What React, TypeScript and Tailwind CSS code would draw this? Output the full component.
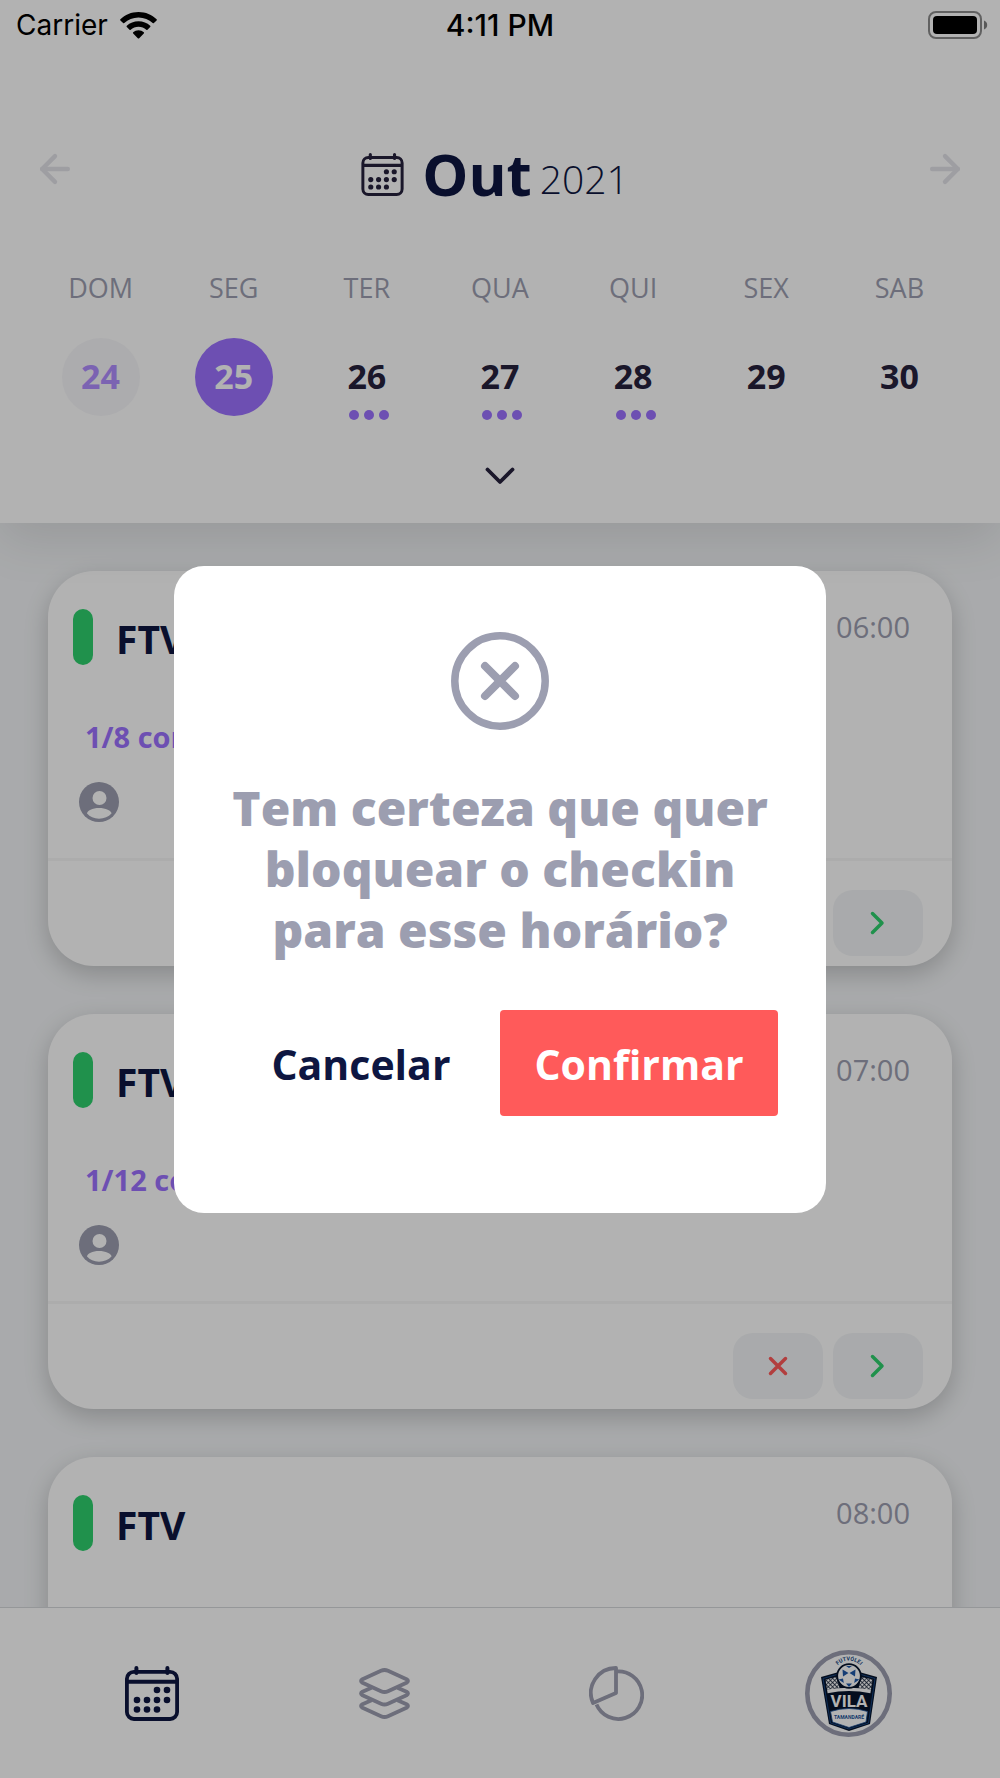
import React, { useState } from "react";
import { FiArrowLeft, FiArrowRight } from "react-icons/fi";

interface DayType {
    label: string;
    day: number;
    events?: number;
}

interface ClassType {
    name: string;
    time: string;
    confirmed?: string;
}

const days: DayType[] = [
    { label: "DOM", day: 24 },
    { label: "SEG", day: 25 },
    { label: "TER", day: 26, events: 3 },
    { label: "QUA", day: 27, events: 3 },
    { label: "QUI", day: 28, events: 3 },
    { label: "SEX", day: 29 },
    { label: "SAB", day: 30 },
];

const classes: ClassType[] = [
    { name: "FTV", time: "06:00", confirmed: "1/8 confirmados" },
    { name: "FTV", time: "07:00", confirmed: "1/12 confirmados" },
    { name: "FTV", time: "08:00" },
];

const TODAY = 24;

function CalendarIcon({ className }: { className: string }) {
    const dots = [
        [32, 24], [42, 24],
        [12, 34], [22, 34], [32, 34], [42, 34],
        [12, 43.5], [22, 43.5], [32, 43.5],
    ];
    return (
        <svg viewBox="0 0 54 55" fill="none" stroke="currentColor" className={className}>
            <rect x="1.9" y="5.8" width="50.2" height="47.2" rx="7" strokeWidth="3.8" />
            <path d="M2 15.8h50" strokeWidth="4" />
            <path d="M11.4 2v5M42.4 2v5" strokeWidth="4" strokeLinecap="round" />
            {dots.map(([cx, cy]) => (
                <circle key={`${cx}-${cy}`} cx={cx} cy={cy} r="3.3" fill="currentColor" stroke="none" />
            ))}
        </svg>
    );
}

function StatusBar() {
    return (
        <div className="grid grid-cols-3 items-center h-[50px] px-4 text-[28px] text-black font-[Inter,sans-serif]">
            <div className="flex items-center gap-3">
                <span>Carrier</span>
                <svg viewBox="0 0 37 27" className="w-[37px] h-[27px]" fill="currentColor">
                    <path d="M18.5 0C25.6 0 32 2.8 36.6 7.2a.9.9 0 0 1 0 1.2l-2.7 2.7a.9.9 0 0 1-1.2 0C29 7.5 24 5.4 18.5 5.4S8 7.5 4.3 11.1a.9.9 0 0 1-1.2 0L.4 8.4a.9.9 0 0 1 0-1.2C5 2.8 11.4 0 18.5 0Z" />
                    <path d="M18.5 9.3c4.5 0 8.6 1.7 11.7 4.5.4.4.4.9 0 1.3l-2.7 2.6c-.4.4-.9.4-1.2.1-2.1-1.9-4.8-3-7.8-3s-5.7 1.100-7.8 3c-.3.3-.8.3-1.2-.1l-2.7-2.6c-.4-.4-.4-.9 0-1.3 3.1-2.8 7.2-4.5 11.7-4.5Z" />
                    <path d="M18.5 18.3c2 0 3.9.7 5.3 2 .4.3.4.9 0 1.2l-4.6 4.8c-.4.4-1 .4-1.4 0l-4.6-4.8c-.4-.3-.4-.9 0-1.2 1.4-1.3 3.3-2 5.3-2Z" />
                </svg>
            </div>
            <span className="text-center text-[30px] font-medium">4:11 PM</span>
            <svg viewBox="0 0 60 28" className="w-[60px] h-[28px] -mr-1 justify-self-end">
                <rect x="1" y="1" width="52" height="26" rx="7" fill="none" stroke="black" strokeOpacity="0.45" strokeWidth="2" />
                <rect x="5" y="5" width="44" height="18" rx="4" />
                <path d="M56 9.5c2 .6 3.2 2.4 3.2 4.5s-1.2 3.9-3.2 4.5z" fillOpacity="0.5" />
            </svg>
        </div>
    );
}

function ClassCard({ item }: { item: ClassType }) {
    return (
        <article className="shrink-0 rounded-[46px] bg-white shadow-[0_8px_24px_rgba(0,0,0,0.2)]">
            <div className="flex items-start pt-[38px] pl-[25px] pr-[42px]">
                <span className="w-5 h-14 rounded-full bg-[#2ed06d]" />
                <h2 className="flex-1 pl-[23px] pt-1 text-[39px] leading-[52px] font-bold text-[#0e1641]">{item.name}</h2>
                <time className="text-[29px] leading-[36px] text-[#9c9eb0]">{item.time}</time>
            </div>
            {item.confirmed && (
                <p className="pt-[54px] pl-[37px] text-[29px] leading-[36px] font-bold text-[#9c72ff]">{item.confirmed}</p>
            )}
            <div className="pt-[27px] pb-9 pl-[31px] text-[#9c9eb0]">
                {item.confirmed && (
                    <svg viewBox="0 0 40 40" className="w-10 h-10">
                        <circle cx="20" cy="20" r="20" fill="currentColor" />
                        <circle cx="20.5" cy="16" r="7" fill="white" />
                        <path d="M8 31.5c0-3 5.5-5.5 12-5.5s12.5 2.5 12.5 5.5c-3 3.4-7.3 5.2-12.5 5.2S11 34.9 8 31.5Z" fill="white" />
                    </svg>
                )}
            </div>
            {item.confirmed && (
                <div className="flex justify-end gap-[10px] pt-[29px] pb-[10px] pr-[29px] border-t-3 border-[#f7f7f7]">
                    <button aria-label="Bloquear checkin" className="flex items-center justify-center w-[90px] h-[66px] rounded-[20px] bg-[#f2f4f6]">
                        <svg viewBox="0 0 20 20" className="w-5 h-5" stroke="#ff5a5a" strokeWidth="3.5" strokeLinecap="round">
                            <path d="M2.5 2.5l15 15M17.5 2.5l-15 15" />
                        </svg>
                    </button>
                    <button aria-label="Abrir horário" className="flex items-center justify-center w-[90px] h-[66px] rounded-[20px] bg-[#f2f4f6]">
                        <svg viewBox="0 0 16 24" className="w-4 h-6" fill="none" stroke="#2ed06d" strokeWidth="3.5" strokeLinecap="round" strokeLinejoin="round">
                            <path d="M2.5 2.5l9.500 9.500-9.500 9.500" />
                        </svg>
                    </button>
                </div>
            )}
            {/* classes without check-ins keep an empty body */}
            {!item.confirmed && <div className="h-52" />}
        </article>
    );
}

function ClubLogo() {
    return (
        <svg viewBox="0 0 87 87" className="w-[87px] h-[87px]" role="img" aria-label="Vila Tamandaré">
            <defs>
                <path id="arc" d="M29.5 20.5A15.5 15.5 0 0 1 58.5 20.5" />
                <pattern id="net" width="3" height="3" patternUnits="userSpaceOnUse" patternTransform="rotate(45)">
                    <rect width="3" height="3" fill="white" />
                    <path d="M0 0h3M0 0v3" stroke="#06142b" strokeWidth="1.3" />
                </pattern>
            </defs>
            <circle cx="43.5" cy="43.5" r="41.2" fill="white" stroke="#9c9eb0" strokeWidth="4.6" />
            <text fontFamily="Roboto, sans-serif" fontSize="5.5" fontWeight="700" fill="#1a4a86" textAnchor="middle">
                <textPath href="#arc" startOffset="50%">FUTVÓLEI</textPath>
            </text>
            <path d="M16 27l16-4.5h24l16 4.5-7 47-21 7-20-7Z" fill="#06142b" />
            <path d="M18 28.5l14-4h24l14 4-6.5 44.5-19.5 6-18.5-6Z" fill="none" stroke="#1c5299" strokeWidth="0.8" />
            <path d="M20.5 29.5l11-2.5 3 11-12.5 1.5Z" fill="url(#net)" />
            <path d="M67.5 29.5l-11-2.5-3 11 12.5 1.5Z" fill="url(#net)" />
            <path d="M22 39.5q22-3.5 44 0l-.6 3.8q-21.5-4.5-42.8 0Z" fill="white" />
            <path d="M25.5 61.5q18.5-6 37 0l-1.5 10.5-17 5.5-16.5-5.5Z" fill="white" stroke="#1c5299" strokeWidth="0.8" />
            <text x="44" y="57" fontFamily="Roboto, sans-serif" fontSize="17" fontWeight="700" fill="white" textAnchor="middle">VILA</text>
            <text x="44" y="68.5" fontFamily="Roboto, sans-serif" fontSize="5" fontWeight="700" fill="#1c5299" textAnchor="middle">TAMANDARÉ</text>
            <circle cx="44" cy="26" r="11.8" fill="white" stroke="#06142b" strokeWidth="1.8" />
            <path d="M37.5 19.5l6 3.5-5.5 3.5ZM50.5 19.5l-6 3.5 5.5 3.5ZM44 37l-3-3.5h6ZM33.5 29.5l4.5-1 .8 4.500ZM54.5 29.5l-4.500-1-.8 4.500ZM41 16h6l-3 2Z" fill="#1f58a8" />
        </svg>
    );
}

function TabBar() {
    return (
        <nav className="grid grid-cols-4 items-center justify-items-center h-[171px] px-9 bg-white border-t border-[#d6d8db] z-10">
            <a href="#agenda" aria-label="Agenda" className="text-[#0e1641]">
                <CalendarIcon className="w-[54px] h-[55px]" />
            </a>
            <a href="#turmas" aria-label="Turmas" className="text-[#9c9eb0]">
                <svg viewBox="0 0 51 51" className="w-[51px] h-[51px]" fill="none" stroke="currentColor" strokeWidth="3.8" strokeLinejoin="round">
                    <path d="M22 2.8Q25.5 1.2 29 2.8L47.5 11.2Q50.5 13 47.5 14.8L29 23.2Q25.5 24.8 22 23.2L3.5 14.8Q.5 13 3.5 11.2Z" />
                    <path d="M12.5 19.7L3.5 23.7Q.5 25.5 3.5 27.3L22 35.7Q25.5 37.3 29 35.7L47.5 27.3Q50.5 25.5 47.5 23.7L38.5 19.7" />
                    <path d="M12.5 32.2L3.5 36.2Q.5 38 3.5 39.8L22 48.2Q25.5 49.8 29 48.2L47.5 39.8Q50.5 38 47.5 36.2L38.5 32.2" />
                </svg>
            </a>
            <a href="#relatorios" aria-label="Relatórios" className="text-[#9c9eb0]">
                <svg viewBox="0 0 55 55" className="w-[55px] h-[55px]" fill="none" stroke="currentColor" strokeWidth="3.8" strokeLinejoin="round">
                    <path d="M27 2V27L4 37A25 25 0 0 1 27 2Z" />
                    <path d="M27 5.5A23.8 23.8 0 1 1 7.5 38.5" />
                </svg>
            </a>
            <a href="#perfil">
                <ClubLogo />
            </a>
        </nav>
    );
}

export default function App() {
    const [selected, setSelected] = useState(25);
    const [open, setOpen] = useState(true);

    return (
        <div className="flex flex-col h-screen overflow-hidden bg-[#f2f4f6] font-['Open_Sans',sans-serif]">
            <header className="relative z-10 bg-white shadow-[0_16px_48px_rgba(0,0,0,0.1)]">
                <StatusBar />
                <div className="flex items-start justify-between px-[33px] pt-[84px]">
                    <button aria-label="Semana anterior" className="pt-[13px] text-[#e3e3e9]">
                        <FiArrowLeft className="w-11 h-11" strokeWidth={2.4} />
                    </button>
                    <h1 className="flex items-center pr-[10px] text-[#0e1641]">
                        <CalendarIcon className="w-[43px] h-[43px] mr-[18px] text-[#26213d]" />
                        <span className="text-[58px] leading-[80px] font-bold">Out</span>
                        <span className="pl-2 pt-[10px] text-[39px] font-light">2021</span>
                    </h1>
                    <button aria-label="Próxima semana" className="pt-[13px] text-[#e3e3e9]">
                        <FiArrowRight className="w-11 h-11" strokeWidth={2.4} />
                    </button>
                </div>

                <div className="grid grid-cols-7 px-[34px] pt-[54px]">
                    {days.map((d) => (
                        <div key={d.label} className="flex flex-col items-center">
                            <span className="text-[27px] leading-[40px] text-[#9c9eb0]">{d.label}</span>
                            <button
                                onClick={() => setSelected(d.day)}
                                className={
                                    "mt-[30px] pb-[2px] w-[78px] h-[78px] rounded-full text-[34px] font-bold " +
                                    (d.day === selected
                                        ? "bg-[#9c72ff] text-white"
                                        : d.day === TODAY
                                            ? "bg-[#f7f7fa] text-[#b08eff]"
                                            : "text-[#26213d]")
                                }
                            >
                                {d.day}
                            </button>
                            {d.events && (
                                <div className="flex gap-[5px] pl-[5px] -mt-[6px]">
                                    {Array.from({ length: d.events }, (_, i) => (
                                        <span key={i} className="w-[10px] h-[10px] rounded-full bg-[#9c72ff]" />
                                    ))}
                                </div>
                            )}
                        </div>
                    ))}
                </div>

                <button aria-label="Expandir calendário" className="flex justify-center w-full pt-[47px] pb-[38px]">
                    <svg viewBox="0 0 30 18" className="w-[30px] h-[18px]" fill="none" stroke="#26213d" strokeWidth="3.8" strokeLinecap="round" strokeLinejoin="round">
                        <path d="M2.5 2.5L15 15 27.5 2.5" />
                    </svg>
                </button>
            </header>

            <main className="flex flex-col flex-1 min-h-0 gap-12 px-12 pt-12 overflow-hidden">
                {classes.map((item) => (
                    <ClassCard key={item.time} item={item} />
                ))}
            </main>

            <TabBar />

            {open && (
                <div className="fixed inset-0 z-20 flex items-center justify-center bg-black/30">
                    <div role="dialog" aria-modal="true" className="flex flex-col items-center w-full max-w-[652px] px-12 pt-[66px] pb-[97px] rounded-[30px] bg-white">
                        <svg viewBox="0 0 98 98" className="w-[98px] h-[98px]" fill="none" stroke="#9c9eb0">
                            <circle cx="49" cy="49" r="45.2" strokeWidth="7.5" />
                            <path d="M34 34l30 30M64 34L34 64" strokeWidth="8" strokeLinecap="round" />
                        </svg>
                        <p className="pt-[47px] text-center text-[48px] leading-[61px] font-extrabold text-[#9c9eb0]">
                            Tem certeza que quer bloquear o checkin para esse horário?
                        </p>
                        <div className="grid grid-cols-2 w-full pt-[50px] text-[41px] font-bold">
                            <button onClick={() => setOpen(false)} className="h-[106px] pt-1 text-[#0e1641]">
                                Cancelar
                            </button>
                            <button onClick={() => setOpen(false)} className="h-[106px] pt-1 rounded-[4px] bg-[#ff5a5a] text-white">
                                Confirmar
                            </button>
                        </div>
                    </div>
                </div>
            )}
        </div>
    );
}
